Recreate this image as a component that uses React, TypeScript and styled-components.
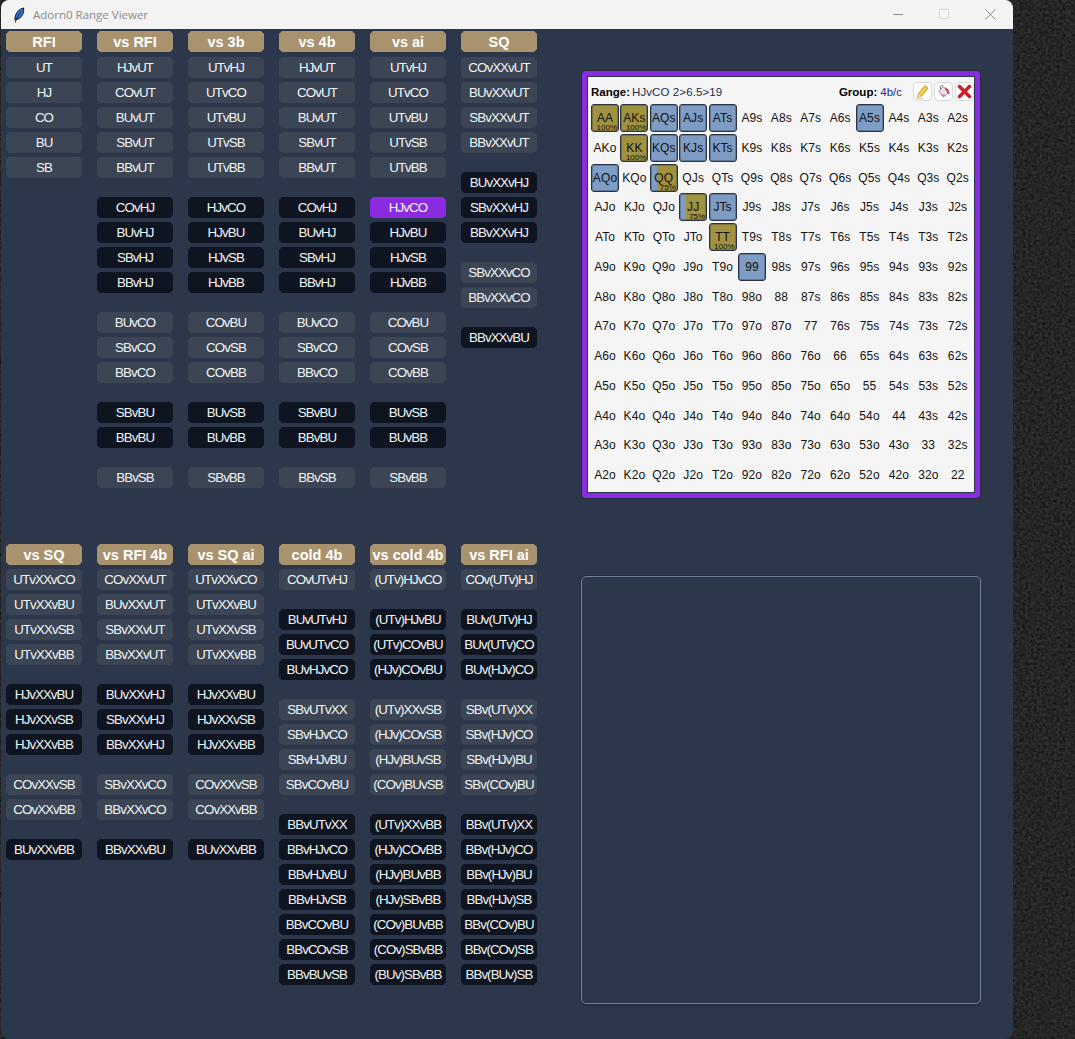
import React from "react";
import styled, { createGlobalStyle } from "styled-components";

const Global = createGlobalStyle`
  html, body { margin: 0; padding: 0; background: #242424; }
  body { width: 1075px; height: 1039px; overflow: hidden; font-family: "Liberation Sans", Arial, sans-serif; }
`;

const Desktop = styled.div`
  position: relative;
  width: 1075px;
  height: 1039px;
  box-sizing: border-box;
  padding-left: 1px;
  background: #242424;
  overflow: hidden;
`;

const Wallpaper = styled.svg`
  position: absolute;
  inset: 0;
  width: 1075px;
  height: 1039px;
`;

const Window = styled.div`
  position: relative;
  width: 1012px;
  height: 1039px;
  background: #2d374c;
  border-radius: 8px;
  overflow: hidden;
  display: flex;
  flex-direction: column;
`;

const TitleBar = styled.div`
  height: 29px;
  flex: none;
  background: #f3f3f3;
  display: flex;
  align-items: center;
  padding-left: 12px;
  color: #8a8a8a;
  font-family: "Open Sans", "Noto Sans", sans-serif;
  font-size: 11.5px;
`;

const TitleText = styled.span`
  margin-left: 8px;
`;

const WindowControls = styled.div`
  margin-left: auto;
  display: flex;
  align-items: center;
`;

const ControlButton = styled.div`
  width: 46px;
  height: 29px;
  display: flex;
  align-items: center;
  justify-content: center;
`;

const Body = styled.div`
  flex: 1;
  display: flex;
  min-height: 0;
`;

const RangeColumn = styled.div`
  width: 545px;
  flex: none;
  padding: 2px 0 0 5px;
  box-sizing: border-box;
`;

const RangeSection = styled.div<{ $height: number }>`
  height: ${(p) => p.$height}px;
  display: flex;
  gap: 15px;
`;

const Column = styled.div`
  width: 76px;
  display: flex;
  flex-direction: column;
  gap: 19px;
`;

const Group = styled.div`
  display: flex;
  flex-direction: column;
  gap: 4px;
`;

const octagon = `clip-path: polygon(3px 0, calc(100% - 3px) 0, 100% 3px, 100% calc(100% - 3px), calc(100% - 3px) 100%, 3px 100%, 0 calc(100% - 3px), 0 3px);`;

const Header = styled.div<{ $after: number }>`
  height: 21px;
  margin-bottom: ${(p) => p.$after - 19}px;
  background: #a9936f;
  color: #fff;
  font-weight: 700;
  font-size: 14.5px;
  line-height: 22px;
  text-align: center;
  white-space: nowrap;
  ${octagon}
`;

const RangeButton = styled.div<{ $tone: "light" | "dark" | "active" }>`
  height: 21px;
  line-height: 21px;
  font-size: 13.3px;
  letter-spacing: -0.9px;
  text-align: center;
  white-space: nowrap;
  color: #f2f6f6;
  background: ${(p) =>
    p.$tone === "light" ? "#3c4554" : p.$tone === "dark" ? "#0e1420" : "#8a2be2"};
  ${octagon}
`;

const Side = styled.div`
  flex: 1;
  padding: 42px 0 0 36px;
  display: flex;
  flex-direction: column;
`;

const RangeCard = styled.div`
  width: 398px;
  height: 427px;
  box-sizing: border-box;
  border: 5px solid #8a2be2;
  border-radius: 4px;
  box-shadow: 0 0 0 1px #232d3f, inset 0 0 0 1px #2d374c;
  background: #f5f5f5;
  padding: 3px 0 0 3px;
  display: flex;
  flex-direction: column;
  color: #000;
`;

const InfoBar = styled.div`
  height: 25px;
  flex: none;
  display: flex;
  align-items: center;
  font-size: 11.5px;
  font-family: "Liberation Sans", sans-serif;
  padding-left: 1px;
`;

const InfoLabel = styled.b`
  margin-right: 2px;
  font-weight: 700;
`;

const RangeValue = styled.span`
  color: #1c2b4f;
  letter-spacing: 0.1px;
`;

const GroupValue = styled.span`
  color: #1c2a8a;
  margin-left: 1px;
`;

const GroupInfo = styled.div`
  margin-left: auto;
  display: flex;
  align-items: center;
  margin-right: 1px;
`;

const Tools = styled.div`
  display: flex;
  gap: 2px;
  margin-left: 11px;
`;

const ToolButton = styled.div`
  width: 19px;
  height: 19px;
  box-sizing: border-box;
  border: 1px solid #d8d8d8;
  border-radius: 4px;
  background: #fff;
  display: flex;
  align-items: center;
  justify-content: center;
`;

const HandGrid = styled.div`
  flex: 1;
  display: grid;
  grid-template-columns: repeat(13, 29.4px);
  grid-auto-rows: 29.75px;
`;

const HandCell = styled.div`
  position: relative;
  width: 28px;
  height: 28px;
  margin-left: 1px;
  display: flex;
  align-items: center;
  justify-content: center;
  font-family: "Liberation Sans", sans-serif;
  font-size: 12px;
  letter-spacing: 0.1px;
  color: #111;
`;

const Marked = styled(HandCell)<{ $blue: number }>`
  box-sizing: border-box;
  border: 1px solid #2b3442;
  border-radius: 3px;
  box-shadow: inset 0 0 0 1px rgba(30, 40, 55, 0.3);
  background: linear-gradient(
    to right,
    #7f9cc4 ${(p) => p.$blue}%,
    #a09240 ${(p) => p.$blue}%
  );
`;

const Percent = styled.span`
  position: absolute;
  right: 1px;
  bottom: -1px;
  font-size: 8px;
  letter-spacing: 0;
`;

const EmptyPanel = styled.div`
  width: 400px;
  height: 428px;
  margin: 78px 0 0 -1px;
  box-sizing: border-box;
  border: 1px solid #71809a;
  border-radius: 5px;
  box-shadow: -1px -1px 0 #232d3f, 0 2px 0 #232d3f;
`;

type Tone = "light" | "dark";
type Col = { title: string; groups: string[][] };

const top: Col[] = [
  { title: "RFI", groups: [["UT", "HJ", "CO", "BU", "SB"]] },
  { title: "vs RFI", groups: [["HJvUT", "COvUT", "BUvUT", "SBvUT", "BBvUT"], ["COvHJ", "BUvHJ", "SBvHJ", "BBvHJ"], ["BUvCO", "SBvCO", "BBvCO"], ["SBvBU", "BBvBU"], ["BBvSB"]] },
  { title: "vs 3b", groups: [["UTvHJ", "UTvCO", "UTvBU", "UTvSB", "UTvBB"], ["HJvCO", "HJvBU", "HJvSB", "HJvBB"], ["COvBU", "COvSB", "COvBB"], ["BUvSB", "BUvBB"], ["SBvBB"]] },
  { title: "vs 4b", groups: [["HJvUT", "COvUT", "BUvUT", "SBvUT", "BBvUT"], ["COvHJ", "BUvHJ", "SBvHJ", "BBvHJ"], ["BUvCO", "SBvCO", "BBvCO"], ["SBvBU", "BBvBU"], ["BBvSB"]] },
  { title: "vs ai", groups: [["UTvHJ", "UTvCO", "UTvBU", "UTvSB", "UTvBB"], ["HJvCO", "HJvBU", "HJvSB", "HJvBB"], ["COvBU", "COvSB", "COvBB"], ["BUvSB", "BUvBB"], ["SBvBB"]] },
  { title: "SQ", groups: [["COvXXvUT", "BUvXXvUT", "SBvXXvUT", "BBvXXvUT"], ["BUvXXvHJ", "SBvXXvHJ", "BBvXXvHJ"], ["SBvXXvCO", "BBvXXvCO"], ["BBvXXvBU"]] },
];

const vsSq = [["UTvXXvCO", "UTvXXvBU", "UTvXXvSB", "UTvXXvBB"], ["HJvXXvBU", "HJvXXvSB", "HJvXXvBB"], ["COvXXvSB", "COvXXvBB"], ["BUvXXvBB"]];

const bottom: Col[] = [
  { title: "vs SQ", groups: vsSq },
  { title: "vs RFI 4b", groups: [["COvXXvUT", "BUvXXvUT", "SBvXXvUT", "BBvXXvUT"], ["BUvXXvHJ", "SBvXXvHJ", "BBvXXvHJ"], ["SBvXXvCO", "BBvXXvCO"], ["BBvXXvBU"]] },
  { title: "vs SQ ai", groups: vsSq },
  { title: "cold 4b", groups: [["COvUTvHJ"], ["BUvUTvHJ", "BUvUTvCO", "BUvHJvCO"], ["SBvUTvXX", "SBvHJvCO", "SBvHJvBU", "SBvCOvBU"], ["BBvUTvXX", "BBvHJvCO", "BBvHJvBU", "BBvHJvSB", "BBvCOvBU", "BBvCOvSB", "BBvBUvSB"]] },
  { title: "vs cold 4b", groups: [["(UTv)HJvCO"], ["(UTv)HJvBU", "(UTv)COvBU", "(HJv)COvBU"], ["(UTv)XXvSB", "(HJv)COvSB", "(HJv)BUvSB", "(COv)BUvSB"], ["(UTv)XXvBB", "(HJv)COvBB", "(HJv)BUvBB", "(HJv)SBvBB", "(COv)BUvBB", "(COv)SBvBB", "(BUv)SBvBB"]] },
  { title: "vs RFI ai", groups: [["COv(UTv)HJ"], ["BUv(UTv)HJ", "BUv(UTv)CO", "BUv(HJv)CO"], ["SBv(UTv)XX", "SBv(HJv)CO", "SBv(HJv)BU", "SBv(COv)BU"], ["BBv(UTv)XX", "BBv(HJv)CO", "BBv(HJv)BU", "BBv(HJv)SB", "BBv(COv)BU", "BBv(COv)SB", "BBv(BUv)SB"]] },
];

const ranks = ["A", "K", "Q", "J", "T", "9", "8", "7", "6", "5", "4", "3", "2"];
const handName = (r: number, c: number) =>
  r === c ? ranks[r] + ranks[c] : r < c ? ranks[r] + ranks[c] + "s" : ranks[c] + ranks[r] + "o";

const marks: Record<string, { blue: number; pct?: string }> = {
  AA: { blue: 0, pct: "100%" },
  AKs: { blue: 0, pct: "100%" },
  KK: { blue: 0, pct: "100%" },
  TT: { blue: 0, pct: "100%" },
  QQ: { blue: 22, pct: "75%" },
  JJ: { blue: 22, pct: "75%" },
  AQs: { blue: 100 }, AJs: { blue: 100 }, ATs: { blue: 100 }, A5s: { blue: 100 },
  KQs: { blue: 100 }, KJs: { blue: 100 }, KTs: { blue: 100 },
  AQo: { blue: 100 }, JTs: { blue: 100 }, "99": { blue: 100 },
};

const Sections = ({ cols, after }: { cols: Col[]; after: number }) => (
  <>
    {cols.map((col) => (
      <Column key={col.title}>
        <Header $after={after}>{col.title}</Header>
        {col.groups.map((g, i) => (
          <Group key={i}>
            {g.map((label) => (
              <RangeButton
                key={label}
                $tone={col.title === "vs ai" && label === "HJvCO" ? "active" : ((i % 2 ? "dark" : "light") as Tone)}
              >
                {label}
              </RangeButton>
            ))}
          </Group>
        ))}
      </Column>
    ))}
  </>
);

const Feather = () => (
  <svg width="12" height="16" viewBox="0 0 12 16">
    <path d="M2 13 C1.5 8 5 2 10.5 1 C11.5 6 8.5 11.5 3.6 12.5 Z" fill="#2f78d8" stroke="#10151f" strokeWidth="1" />
    <path d="M2.4 15.5 L3 12.5 L8 4.5" fill="none" stroke="#10151f" strokeWidth="0.9" />
  </svg>
);

const Pencil = () => (
  <svg width="15" height="15" viewBox="0 0 15 15">
    <path d="M3.2 9.8 L10 1.6 L13 4.2 L6.2 12.2 L2.6 13.2 Z" fill="#f0d040" stroke="#a5871c" strokeWidth="0.8" />
    <path d="M2.6 13.2 L3.2 9.8 L6.2 12.2 Z" fill="#ecd0a8" />
    <path d="M1 14.3 H8" stroke="#c9b46a" strokeWidth="0.8" />
  </svg>
);

const Bucket = () => (
  <svg width="15" height="15" viewBox="0 0 15 15">
    <path d="M2.5 7 L7.5 2.5 L12 9 L7.5 13 Z" fill="#e3e3e8" stroke="#7a7a85" strokeWidth="0.8" />
    <path d="M7 2.2 C5 .6 3.6 2 4.6 5" fill="none" stroke="#5c5c68" strokeWidth="0.9" />
    <path d="M9 3.6 C12 4 13.6 7 13.2 11 L11.4 8.4 Z" fill="#d8324a" />
    <path d="M4 10 L7.5 13 L10 11 Z" fill="#e07a8a" />
  </svg>
);

const Cross = () => (
  <svg width="15" height="15" viewBox="0 0 15 15">
    <path d="M2.5 2.5 L12.5 12.5 M12.5 2.5 L2.5 12.5" stroke="#cf2029" strokeWidth="3.6" strokeLinecap="round" />
  </svg>
);

export default function App() {
  return (
    <Desktop>
      <Global />
      <Wallpaper aria-hidden="true">
        <filter id="grain" colorInterpolationFilters="sRGB">
          <feTurbulence type="fractalNoise" baseFrequency="0.35" numOctaves="4" seed="7" />
          <feColorMatrix values="0 0 0 0 0.07  0 0 0 0 0.07  0 0 0 0 0.07  1.3 1.3 0 0 -0.95" />
        </filter>
        <rect width="1075" height="1039" fill="#303030" />
        <rect width="1075" height="1039" filter="url(#grain)" />
      </Wallpaper>
      <Window>
        <TitleBar>
          <Feather />
          <TitleText>Adorn0 Range Viewer</TitleText>
          <WindowControls>
            <ControlButton>
              <svg width="11" height="11" viewBox="0 0 11 11"><path d="M0 5.5 H10" stroke="#8f8f8f" /></svg>
            </ControlButton>
            <ControlButton>
              <svg width="11" height="11" viewBox="0 0 11 11"><rect x="0.5" y="0.5" width="9" height="9" rx="1" fill="none" stroke="#d6d6d6" /></svg>
            </ControlButton>
            <ControlButton>
              <svg width="11" height="11" viewBox="0 0 11 11"><path d="M0.5 0.5 L10.5 10.5 M10.5 0.5 L0.5 10.5" stroke="#8f8f8f" /></svg>
            </ControlButton>
          </WindowControls>
        </TitleBar>
        <Body>
          <RangeColumn>
            <RangeSection $height={513}><Sections cols={top} after={5} /></RangeSection>
            <RangeSection $height={480}><Sections cols={bottom} after={4} /></RangeSection>
          </RangeColumn>
          <Side>
            <RangeCard>
              <InfoBar>
                <InfoLabel>Range:</InfoLabel>
                <RangeValue>HJvCO 2&gt;6.5&gt;19</RangeValue>
                <GroupInfo>
                  <InfoLabel>Group:</InfoLabel>
                  <GroupValue>4b/c</GroupValue>
                  <Tools>
                    <ToolButton><Pencil /></ToolButton>
                    <ToolButton><Bucket /></ToolButton>
                    <ToolButton><Cross /></ToolButton>
                  </Tools>
                </GroupInfo>
              </InfoBar>
              <HandGrid>
                {ranks.flatMap((_, r) =>
                  ranks.map((__, c) => {
                    const name = handName(r, c);
                    const m = marks[name];
                    return m ? (
                      <Marked key={name} $blue={m.blue}>
                        {name}
                        {m.pct && <Percent>{m.pct}</Percent>}
                      </Marked>
                    ) : (
                      <HandCell key={name}>{name}</HandCell>
                    );
                  })
                )}
              </HandGrid>
            </RangeCard>
            <EmptyPanel />
          </Side>
        </Body>
      </Window>
    </Desktop>
  );
}
